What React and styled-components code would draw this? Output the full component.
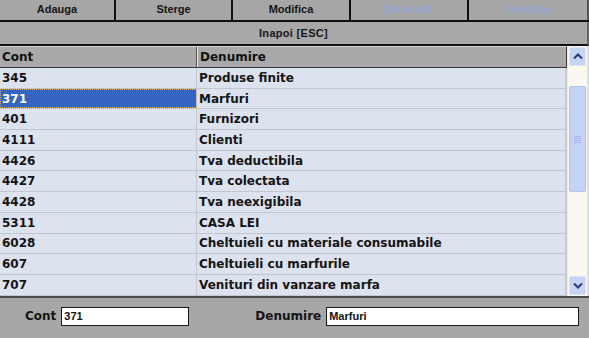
import React from "react";
import styled, { createGlobalStyle } from "styled-components";

const GlobalStyle = createGlobalStyle`
  html, body {
    margin: 0;
    padding: 0;
    background: #a7a7a7;
    font-family: "Liberation Sans", Arial, sans-serif;
  }
`;

const rows = [
  ["345", "Produse finite"],
  ["371", "Marfuri"],
  ["401", "Furnizori"],
  ["4111", "Clienti"],
  ["4426", "Tva deductibila"],
  ["4427", "Tva colectata"],
  ["4428", "Tva neexigibila"],
  ["5311", "CASA LEI"],
  ["6028", "Cheltuieli cu materiale consumabile"],
  ["607", "Cheltuieli cu marfurile"],
  ["707", "Venituri din vanzare marfa"],
];

const buttons = [
  { label: "Adauga" },
  { label: "Sterge" },
  { label: "Modifica" },
  { label: "De acord", disabled: true },
  { label: "Renunta", disabled: true },
];

const App = () => {
  return (
    <Window>
      <GlobalStyle />
      <Toolbar>
        {buttons.map((b) => (
          <ToolButton key={b.label} disabled={b.disabled}>
            {b.label}
          </ToolButton>
        ))}
      </Toolbar>
      <BackBar>Inapoi [ESC]</BackBar>
      <GridArea>
        <Grid>
          <HeaderRow>
            <HeadCell $w={197}>Cont</HeadCell>
            <HeadCell>Denumire</HeadCell>
          </HeaderRow>
          {rows.map(([cont, den], i) => (
            <Row key={cont}>
              <Cell $w={197} $selected={i === 1}>
                {cont}
              </Cell>
              <Cell>{den}</Cell>
            </Row>
          ))}
        </Grid>
        <Scrollbar>
          <ArrowButton>
            <svg width="10" height="7" viewBox="0 0 10 7">
              <path d="M1 5.5 L5 1.5 L9 5.5" fill="none" stroke="#243a7a" strokeWidth="2" />
            </svg>
          </ArrowButton>
          <Track>
            <Thumb>
              <Grip />
            </Thumb>
          </Track>
          <ArrowButton>
            <svg width="10" height="7" viewBox="0 0 10 7">
              <path d="M1 1.5 L5 5.5 L9 1.5" fill="none" stroke="#243a7a" strokeWidth="2" />
            </svg>
          </ArrowButton>
        </Scrollbar>
      </GridArea>
      <Footer>
        <Field>
          <Label>Cont</Label>
          <Input $w={128} value="371" readOnly />
        </Field>
        <Field>
          <Label>Denumire</Label>
          <Input $w={253} value="Marfuri" readOnly />
        </Field>
      </Footer>
    </Window>
  );
};

export default App;

const gridFont = `"DejaVu Sans", "Liberation Sans", sans-serif`;

const Window = styled.div`
  width: 589px;
  height: 338px;
  display: flex;
  flex-direction: column;
  background: #a7a7a7;
  overflow: hidden;
`;

const Toolbar = styled.div`
  display: grid;
  grid-template-columns: 116px 117px 118px 118px 1fr;
  height: 22px;
  border-bottom: 2px solid #101010;
  box-sizing: border-box;
`;

const ToolButton = styled.div`
  display: flex;
  align-items: center;
  justify-content: center;
  font-size: 11px;
  font-weight: bold;
  color: ${(p) => (p.disabled ? "#97a6d8" : "#151515")};
  background: #a6a6a6;
  border-right: 2px solid #101010;
  &:last-child {
    border-right: 2px solid #555;
  }
  padding-bottom: 2px;
`;

const BackBar = styled.div`
  height: 24px;
  display: flex;
  align-items: center;
  justify-content: center;
  font-size: 11px;
  font-weight: bold;
  letter-spacing: 0.3px;
  color: #151515;
  background: #a8a8a8;
  border-bottom: 2px solid #101010;
  border-right: 2px solid #666;
  box-sizing: border-box;
`;

const GridArea = styled.div`
  display: flex;
  height: 252px;
  background: #d9dee8;
  border-bottom: 2px solid #4a4a4a;
  box-sizing: border-box;
`;

const Grid = styled.div`
  flex: 1;
  display: flex;
  flex-direction: column;
`;

const HeaderRow = styled.div`
  display: flex;
  height: 22px;
  background: #a9a9a9;
  border-top: 1px solid #d6d6d6;
  border-bottom: 1px solid #3a3a3a;
  border-right: 1px solid #3a3a3a;
  box-sizing: border-box;
`;

const HeadCell = styled.div`
  ${(p) => (p.$w ? `width: ${p.$w}px;` : "flex: 1;")}
  display: flex;
  align-items: center;
  padding-left: 2px;
  font-family: ${gridFont};
  font-size: 12px;
  font-weight: bold;
  color: #111;
  box-sizing: border-box;
  border-right: ${(p) => (p.$w ? "1px solid #555" : "none")};
  border-left: ${(p) => (p.$w ? "none" : "1px solid #e4e4e4")};
`;

const Row = styled.div`
  display: flex;
  height: 20.7px;
  border-bottom: 1px solid #c2c6ce;
  border-right: 1px solid #c9ccd3;
  box-sizing: border-box;
  background: #dce2ee;
`;

const Cell = styled.div`
  ${(p) => (p.$w ? `width: ${p.$w}px;` : "flex: 1;")}
  display: flex;
  align-items: center;
  padding-left: 2px;
  font-family: ${gridFont};
  font-size: 12px;
  font-weight: bold;
  box-sizing: border-box;
  color: ${(p) => (p.$selected ? "#ffffff" : "#141414")};
  background: ${(p) => (p.$selected ? "#3464c4" : "transparent")};
  border-right: 1px solid #c3c7cf;
  outline: ${(p) => (p.$selected ? "1px dotted #d8b060" : "none")};
  outline-offset: -1px;
`;

const Scrollbar = styled.div`
  width: 19px;
  margin-right: 2px;
  display: flex;
  flex-direction: column;
  background: #fbf8f0;
  border-left: 1px solid #eceae4;
`;

const ArrowButton = styled.div`
  height: 17px;
  margin: 1px 1px;
  display: flex;
  align-items: center;
  justify-content: center;
  background: #c6d4f6;
  border: 1px solid #dbe4fa;
  border-radius: 2px;
`;

const Track = styled.div`
  flex: 1;
  padding-top: 19px;
`;

const Thumb = styled.div`
  height: 104px;
  margin: 0 1px;
  background: #c3d2f7;
  border: 1px solid #b1c3ee;
  border-radius: 2px;
  display: flex;
  align-items: center;
  justify-content: center;
`;

const Grip = styled.div`
  width: 7px;
  height: 7px;
  background: repeating-linear-gradient(
    to bottom,
    #a5b8e6 0,
    #a5b8e6 1px,
    transparent 1px,
    transparent 2px
  );
`;

const Footer = styled.div`
  flex: 1;
  display: flex;
  align-items: center;
  padding: 0 10px 4px 25px;
  gap: 66px;
  background: #a7a7a7;
`;

const Field = styled.div`
  display: flex;
  align-items: center;
  gap: 5px;
`;

const Label = styled.span`
  font-family: ${gridFont};
  font-size: 12px;
  font-weight: bold;
  color: #151515;
`;

const Input = styled.input`
  width: ${(p) => p.$w}px;
  height: 19px;
  box-sizing: border-box;
  border: 1px solid #1a1a1a;
  background: #fff;
  font-family: "Liberation Sans", Arial, sans-serif;
  font-size: 11px;
  font-weight: bold;
  padding: 0 2px;
  color: #111;
`;
